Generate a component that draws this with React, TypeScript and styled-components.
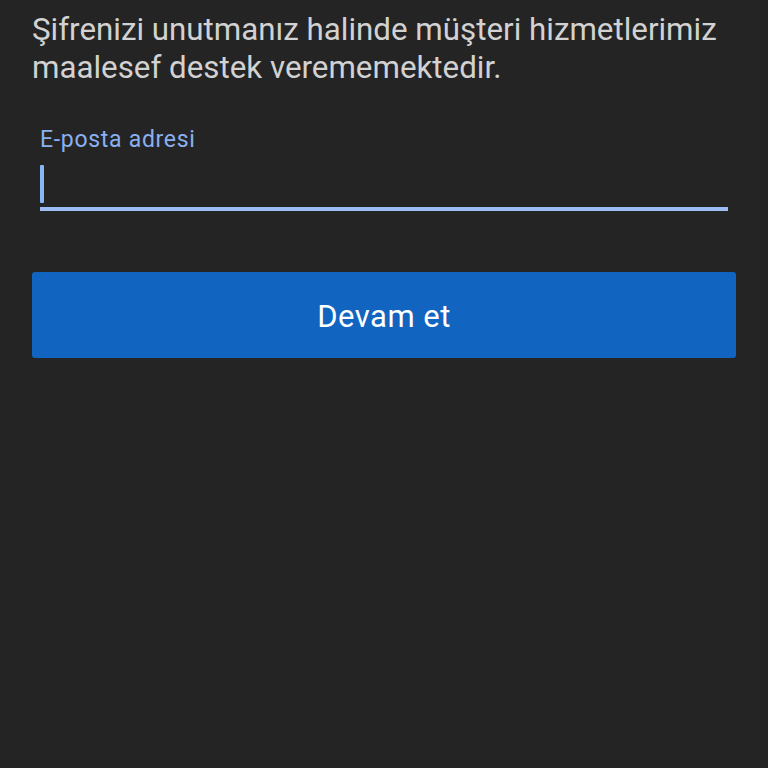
import React from "react";
import styled, { createGlobalStyle } from "styled-components";

const GlobalStyle = createGlobalStyle`
  html, body {
    margin: 0;
    padding: 0;
    background: #242424;
  }
  body {
    font-family: Roboto, "Noto Sans", sans-serif;
  }
`;

const Page = styled.div`
  width: 768px;
  height: 768px;
  box-sizing: border-box;
  padding: 11px 32px 0 32px;
  display: flex;
  flex-direction: column;
  background: #242424;
`;

const Notice = styled.p`
  margin: 0;
  color: #d2d2d2;
  font-size: 31.3px;
  line-height: 38px;
  font-weight: 400;
`;

const Field = styled.div`
  margin-top: 39px;
  padding: 0 8px;
  display: flex;
  flex-direction: column;
`;

const Label = styled.label`
  color: #8ab0f0;
  font-size: 23px;
  line-height: 28px;
  letter-spacing: 0.7px;
`;

const InputLine = styled.div`
  height: 47px;
  margin-top: 6px;
  border-bottom: 4px solid #9cbcf4;
  display: flex;
  align-items: flex-start;
`;

const Caret = styled.span`
  display: block;
  width: 4px;
  height: 38px;
  margin-top: 5px;
  background: #8ab4f8;
  border-radius: 1px;
`;

const Button = styled.button`
  margin-top: 61px;
  height: 86px;
  width: 100%;
  border: none;
  border-radius: 3px;
  background: #1164c0;
  color: #ffffff;
  font-family: Roboto, "Noto Sans", sans-serif;
  font-size: 31px;
  letter-spacing: 0.5px;
  padding-top: 3px;
  cursor: pointer;
`;

export default function App() {
  return (
    <>
      <GlobalStyle />
      <Page>
        <Notice>
          Şifrenizi unutmanız halinde müşteri hizmetlerimiz maalesef destek
          verememektedir.
        </Notice>
        <Field>
          <Label htmlFor="email">E-posta adresi</Label>
          <InputLine id="email">
            <Caret />
          </InputLine>
        </Field>
        <Button>Devam et</Button>
      </Page>
    </>
  );
}
